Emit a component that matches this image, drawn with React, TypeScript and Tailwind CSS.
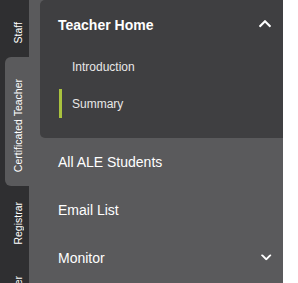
import React from "react";

const CHEVRON =
  "M240.971 130.524l194.343 194.343c9.373 9.373 9.373 24.569 0 33.941l-22.667 22.667c-9.357 9.357-24.522 9.375-33.901.04L224 227.495 69.255 381.516c-9.379 9.335-24.544 9.317-33.901-.04l-22.667-22.667c-9.373-9.373-9.373-24.569 0-33.941L207.03 130.525c9.372-9.373 24.568-9.373 33.941-.001z";

function ChevronUp() {
  return (
    <svg viewBox="5 123 438 266" width="12" height="7.3" className="shrink-0 mb-[2px]">
      <path d={CHEVRON} fill="#ffffff" />
    </svg>
  );
}

function ChevronDown() {
  return (
    <svg viewBox="5 123 438 266" width="10.5" height="6.4" className="shrink-0 rotate-180 mb-[2px]">
      <path d={CHEVRON} fill="#ffffff" />
    </svg>
  );
}

function VText({ children }: { children: React.ReactNode }) {
  return (
    <span className="[writing-mode:vertical-rl] rotate-180 text-[10.5px] leading-[13px] text-white whitespace-nowrap">
      {children}
    </span>
  );
}

export default function App() {
  return (
    <div className="w-[298px] h-[283px] bg-white">
      <div className="flex w-[283px] h-[283px] bg-[#5a5a5c] overflow-hidden font-['Liberation_Sans',Arial,sans-serif]">
        {/* tabs column */}
        <div className="w-[40px] shrink-0 flex flex-col overflow-hidden">
          <div className="h-[57px] shrink-0 w-[29px] bg-[#2f2f31] flex items-end pl-[12px] pb-[14px]">
            <VText>Staff</VText>
          </div>
          <div className="h-[129px] shrink-0 flex bg-[#2f2f31]">
            <div className="w-[5px] shrink-0" />
            <div className="flex-1 bg-[#5a5a5c] rounded-l-[6px] flex items-end pl-[7px] pb-[14px]">
              <VText>Certificated Teacher</VText>
            </div>
          </div>
          <div className="h-[73px] shrink-0 w-[29px] bg-[#2f2f31] flex items-end pl-[12px] pb-[14px]">
            <VText>Registrar</VText>
          </div>
          <div className="h-[80px] shrink-0 w-[29px] bg-[#2f2f31] flex items-start pl-[12px] pt-[17px]">
            <VText>Teacher</VText>
          </div>
        </div>

        {/* main panel */}
        <div className="flex-1 flex flex-col">
          <div className="bg-[#3f3f41] rounded-l-[5px] pb-[16px]">
            <div className="h-[48px] pt-[2px] flex items-center justify-between pl-[18px] pr-[12px]">
              <span className="text-[14px] font-bold text-white">Teacher Home</span>
              <ChevronUp />
            </div>
            <div className="h-[37px] flex items-center pl-[19px]">
              <div className="w-[3px] h-[29px] mr-[10px]" />
              <span className="text-[12px] text-[#e8e8e8]">Introduction</span>
            </div>
            <div className="h-[37px] flex items-center pl-[19px]">
              <div className="w-[3px] h-[29px] mr-[10px] bg-[#a9c23e]" />
              <span className="text-[12px] text-[#e8e8e8]">Summary</span>
            </div>
          </div>
          <div className="h-[48px] flex items-center pl-[18px] pr-[12px]">
            <span className="text-[14px] text-white">All ALE Students</span>
          </div>
          <div className="h-[48px] flex items-center pl-[18px] pr-[12px]">
            <span className="text-[14px] text-white">Email List</span>
          </div>
          <div className="h-[48px] flex items-center justify-between pl-[18px] pr-[12px]">
            <span className="text-[14px] text-white">Monitor</span>
            <ChevronDown />
          </div>
        </div>
      </div>
    </div>
  );
}
